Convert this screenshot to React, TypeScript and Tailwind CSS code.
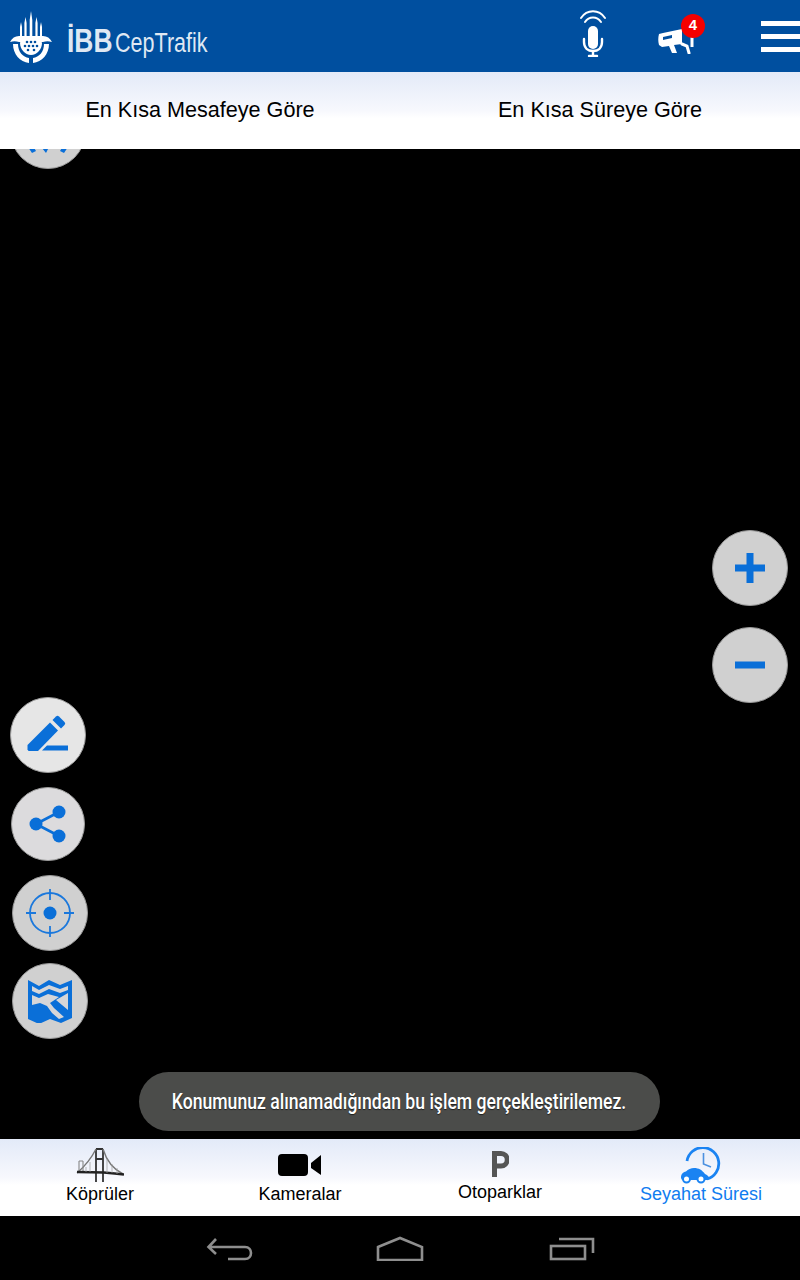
import type { ReactNode } from "react";

const BLUE = "#0a6fd8";

function Emblem() {
  return (
    <svg width="42" height="52" viewBox="0 0 42 52" fill="white">
      {/* spires */}
      <path d="M21 0l1.300 9v16h-2.600V9z" />
      <path d="M15.500 6l1.100 6v13h-2.200V12z" />
      <path d="M26.500 6l1.100 6v13h-2.200V12z" />
      <path d="M11 11l1 5v10h-2V16z" />
      <path d="M31 11l1 5v10h-2V16z" />
      {/* wings */}
      <path d="M0 31c2-4 5-6 9-6h24c4 0 7 2 9 6-3-1-6-1-9 0H9c-3-1-6-1-9 0z" />
      {/* bowl */}
      <path d="M3 33h5c0 8 5 13 11 14v5C10 51 3 43 3 33z" />
      <path d="M39 33h-5c0 8-5 13-11 14v5c9-1 16-9 16-19z" />
      {/* dome */}
      <path d="M10 32c1-4 5-6 11-6s10 2 11 6c0 6-5 12-11 12S10 38 10 32z" />
      <g fill="#004f9f">
        <circle cx="17" cy="31" r="1.300" />
        <circle cx="21" cy="31" r="1.300" />
        <circle cx="25" cy="31" r="1.300" />
        <circle cx="15" cy="35" r="1.300" />
        <circle cx="19" cy="35" r="1.300" />
        <circle cx="23" cy="35" r="1.300" />
        <circle cx="27" cy="35" r="1.300" />
        <circle cx="18" cy="39" r="1.300" />
        <circle cx="24" cy="39" r="1.300" />
      </g>
    </svg>
  );
}

function MicIcon() {
  return (
    <svg width="28" height="48" viewBox="0 0 28 48" fill="none" stroke="white" strokeLinecap="round">
      <path d="M2 9C8 0 20 0 26 9" strokeWidth="2" />
      <path d="M6 13c4-6 12-6 16 0" strokeWidth="2" />
      <rect x="9" y="17" width="10" height="23" rx="5" fill="white" stroke="none" />
      <path d="M5 30v3c0 6 4 9 9 9s9-3 9-9v-3" strokeWidth="2.400" />
      <path d="M14 42v4M10 47h8" strokeWidth="2.400" />
    </svg>
  );
}

function MegaphoneIcon() {
  return (
    <svg width="38" height="26" viewBox="0 0 38 26" fill="none">
      <path d="M1 6l4-1 19-4v15l-8 1 3 8h-5l-3-7-7 1-3-2c-1-4-1-7 0-11z" fill="white" />
      <path d="M5 9l9-2v3l-9 2z" fill="#004f9f" />
      <path d="M24 16l5 2 2 7" stroke="white" strokeWidth="3" strokeLinecap="round" />
      <path d="M34 8v11" stroke="white" strokeWidth="3" />
    </svg>
  );
}

function CircleButton({ bg, size = "w-[76px] h-[76px]", children }: { bg: string; size?: string; children?: ReactNode }) {
  return (
    <div className={`${size} ${bg} rounded-full flex items-center justify-center border border-[#9a9a9a]`}>
      {children}
    </div>
  );
}

function BridgeIcon() {
  return (
    <svg width="48" height="35" viewBox="0 0 48 35" fill="none" stroke="#333">
      <path d="M20 2v33M27 2v33M20 2h7M20 12h7" strokeWidth="1.800" />
      <path d="M20 2C15 12 8 20 1 26M27 2c3 10 10 20 20 25" strokeWidth="1.400" stroke="#777" />
      <path d="M3 14v12M7 14v12M3 14h4" strokeWidth="1.100" stroke="#888" />
      <path d="M1 25c15 0 30 0 47 2.500" strokeWidth="2.600" stroke="#222" />
      <path d="M10 20v5M14 15v10M31 12v14M36 17v9M41 21v6" strokeWidth="0.700" stroke="#999" />
    </svg>
  );
}

function CarClockIcon() {
  return (
    <svg width="40" height="37" viewBox="0 0 40 37" fill="none">
      <path d="M6 14A16 16 0 1 1 26 32" stroke="#1a83f2" strokeWidth="2.800" />
      <path d="M22.500 6v11l7.500 3" stroke="#4a90e0" strokeWidth="1.600" />
      <path d="M0 31c0-4 2-6 5-6.500 2-2 5-3.500 8-3.500 5 0 8 2 11 6 2 1 4 2 4 4l-1 2H1z" fill="#1a83f2" />
      <circle cx="5.500" cy="32" r="3.500" fill="white" stroke="#1a83f2" strokeWidth="2" />
      <circle cx="20" cy="32" r="3.500" fill="white" stroke="#1a83f2" strokeWidth="2" />
    </svg>
  );
}

export default function App() {
  return (
    <div className="w-[800px] h-[1280px] flex flex-col bg-black font-['Liberation_Sans',sans-serif] overflow-hidden">
      {/* Header */}
      <header className="h-[72px] shrink-0 bg-[#004f9f] flex items-center relative z-20">
        <div className="ml-[10px] mt-[1px]">
          <Emblem />
        </div>
        <div className="ml-[15px] flex items-baseline mt-[8px] text-[#dfe8f3] leading-none whitespace-nowrap">
          <span className="w-[48px] text-[33px] font-bold inline-block origin-left scale-x-[.8]">İBB</span>
          <span className="w-[93px] text-[28px] inline-block origin-left scale-x-[.77]">CepTrafik</span>
        </div>
        <div className="ml-auto flex items-center">
          <div className="mt-[-6px]">
            <MicIcon />
          </div>
          <div className="relative ml-[51px] mt-[9px]">
            <MegaphoneIcon />
            <span className="absolute -top-[14px] right-[-9px] w-[24px] h-[24px] rounded-full bg-[#f40000] text-white text-[15px] font-bold flex items-center justify-center">
              4
            </span>
          </div>
          <div className="ml-[65px] w-[39px] flex flex-col gap-[8px]">
            <div className="h-[5px] bg-white" />
            <div className="h-[5px] bg-white" />
            <div className="h-[5px] bg-white" />
          </div>
        </div>
      </header>

      {/* Route tabs */}
      <div className="h-[77px] shrink-0 grid grid-cols-2 items-center bg-gradient-to-b from-[#e3eaf8] via-[#f7f8fd] via-50% to-white to-60% text-[21.600px] text-black relative z-10">
        <div className="text-center">En Kısa Mesafeye Göre</div>
        <div className="text-center">En Kısa Süreye Göre</div>
      </div>

      {/* Map */}
      <main className="flex-1 relative bg-black">
        <div className="absolute left-[10px] -top-[56px]">
          <CircleButton bg="bg-[#d0d0d0]">
            <svg width="48" height="48" viewBox="0 0 48 48" fill={BLUE}>
              <path d="M4 40l4 6 4-2-3-5zM44 40l-4 6-4-2 3-5zM18 41l4 5 3-6z" />
            </svg>
          </CircleButton>
        </div>

        {/* Zoom */}
        <div className="absolute right-[12px] top-[381px] flex flex-col gap-[21px]">
          <CircleButton bg="bg-[#d0d0d0]">
            <svg width="30" height="30" viewBox="0 0 30 30" fill={BLUE}>
              <path d="M11.500 0h7v11.500H30v7H18.500V30h-7V18.500H0v-7h11.500z" />
            </svg>
          </CircleButton>
          <CircleButton bg="bg-[#d0d0d0]">
            <svg width="30" height="8" viewBox="0 0 30 8" fill={BLUE}>
              <rect width="30" height="7" y="0.500" />
            </svg>
          </CircleButton>
        </div>

        {/* Tools */}
        <div className="absolute left-[10px] top-[548px] flex flex-col items-start">
          <CircleButton bg="bg-[#e6e6e6]" size="w-[76px] h-[76px]">
            <svg width="42" height="40" viewBox="0 0 42 40" fill={BLUE}>
              <path d="M23 7.500l8 8-20 20.500H1.500l-1-1.500V30z" />
              <path d="M25.500 5l3.500-3.500q1.500-1.500 3 0l5.500 5.500q1.500 1.500 0 3L34 13.500z" />
              <path d="M15 35.500l5-5h21v5z" />
            </svg>
          </CircleButton>
          <div className="mt-[14px] ml-[1px]">
            <CircleButton bg="bg-[#dcdbdd]" size="w-[74px] h-[74px]">
              <svg width="38" height="38" viewBox="0 0 38 38" fill={BLUE}>
                <circle cx="7" cy="19" r="6.500" />
                <circle cx="30" cy="7" r="6.500" />
                <circle cx="30" cy="31" r="6.500" />
                <path d="M7 19L30 7M7 19l23 12" stroke={BLUE} strokeWidth="2.600" />
              </svg>
            </CircleButton>
          </div>
          <div className="mt-[14px] ml-[2px]">
            <CircleButton bg="bg-[#d0d0d0]">
              <svg width="48" height="48" viewBox="0 0 48 48" fill="none" stroke="#1b78dc" strokeWidth="1.800">
                <circle cx="24" cy="24" r="20" />
                <path d="M24 0v11M24 37v11M0 24h10M38 24h10" />
                <circle cx="24" cy="24" r="6.500" fill={BLUE} stroke="none" />
              </svg>
            </CircleButton>
          </div>
          <div className="mt-[12px] ml-[2px]">
            <CircleButton bg="bg-[#d0d0d0]">
              <svg width="44" height="43" viewBox="0 0 44 43" fill={BLUE}>
                <path d="M0 0l11 6L21 0l11 5 12-5v38l-11 5-11-4-11 5-11-5z" />
                <path d="M4 6l7 4 10-5 11 4 8-3v4l-8 3-11-4-10 5-7-3zM4 15l7 3 9-4 11 3-9 6 4 5 10 9-5 2-7-6-5-7-7-3-8 2zM40 13v17L28 20z" fill="#d6d6d8" />
              </svg>
            </CircleButton>
          </div>
        </div>

        {/* Toast */}
        <div className="absolute left-[139px] bottom-[8px] w-[521px] h-[59px] rounded-[30px] bg-[#4b4c4a] flex items-center justify-center text-white text-[22px] font-medium font-['Roboto',sans-serif] whitespace-nowrap [text-shadow:0_1px_1px_rgba(0,0,0,.6)]">
          <span className="inline-block scale-x-[.8]">Konumunuz alınamadığından bu işlem gerçekleştirilemez.</span>
        </div>
      </main>

      {/* Bottom nav */}
      <nav className="h-[77px] shrink-0 grid grid-cols-4 bg-gradient-to-b from-[#e3eaf8] via-[#f7f8fd] via-50% to-white to-60% text-[18px] text-black relative z-10">
        <div className="flex flex-col items-center pt-[8px]">
          <div className="h-[36px]"><BridgeIcon /></div>
          <span className="mt-[-2px]">Köprüler</span>
        </div>
        <div className="flex flex-col items-center pt-[15px]">
          <div className="h-[29px]">
            <svg width="44" height="22" viewBox="0 0 44 22" fill="black">
              <rect width="30" height="22" rx="4" />
              <path d="M33 9l10-8v20l-10-7z" />
            </svg>
          </div>
          <span className="mt-[-2px]">Kameralar</span>
        </div>
        <div className="flex flex-col items-center pt-[12px]">
          <div className="h-[29px]">
            <svg width="17" height="26" viewBox="0 0 17 26" fill="none">
              <path d="M2.500 26V2.500h6.500a5.500 5.500 0 0 1 0 12.500H3" stroke="#555" strokeWidth="5" />
            </svg>
          </div>
          <span className="mt-[-1px]">Otoparklar</span>
        </div>
        <div className="flex flex-col items-center pt-[8px] pl-[2px] text-[#0f7cf0]">
          <div className="h-[37px]"><CarClockIcon /></div>
          <span className="mt-[-3px]">Seyahat Süresi</span>
        </div>
      </nav>

      {/* Android system bar */}
      <footer className="h-[64px] shrink-0 bg-black flex items-center justify-center text-[#8e8e8e]">
        <svg width="48" height="26" viewBox="0 0 48 26" fill="none" stroke="currentColor" strokeWidth="2.600" className="mr-[122px]">
          <path d="M11 4L3.500 12l7.500 7M3.500 12H40c8 0 8 12 0 12H23" />
        </svg>
        <svg width="50" height="26" viewBox="0 0 50 26" fill="none" stroke="currentColor" strokeWidth="2.600" className="mr-[124px]">
          <path d="M3 12L25 3l22 9v13H3z" />
        </svg>
        <svg width="46" height="24" viewBox="0 0 46 24" fill="none" stroke="currentColor" strokeWidth="2.600" className="mt-[2px]">
          <rect x="2" y="9" width="34" height="13" />
          <path d="M10 2h34v14" />
        </svg>
      </footer>
    </div>
  );
}
